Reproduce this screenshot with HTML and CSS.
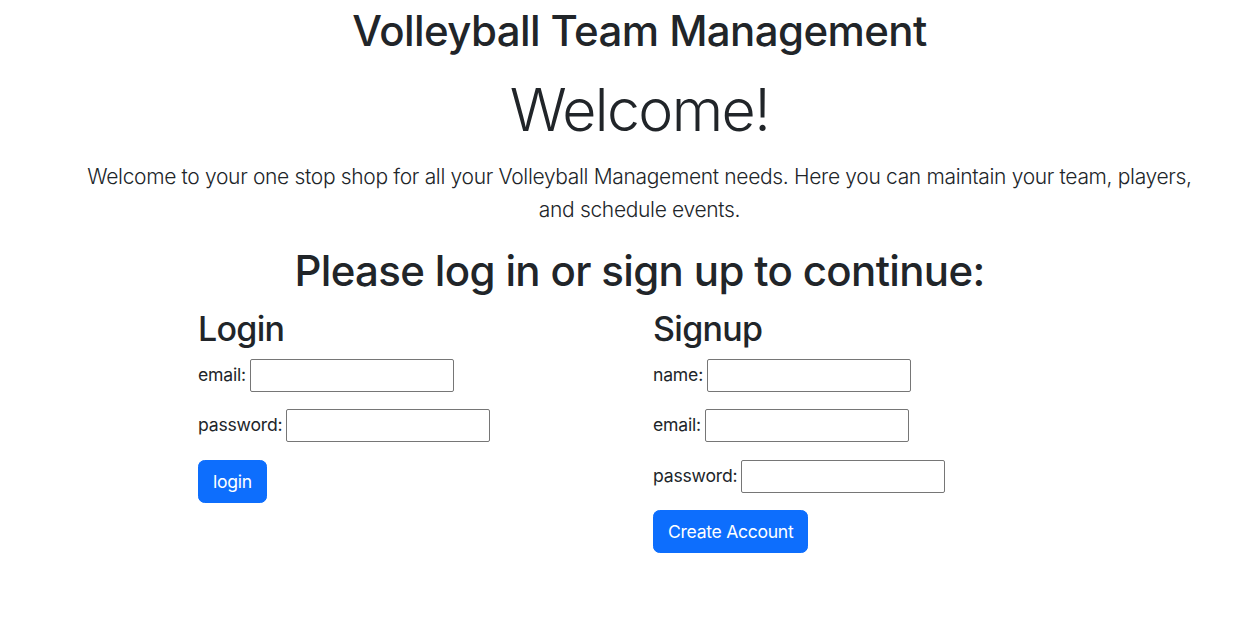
FILE: index.html
```html
<!DOCTYPE html>
<html lang="en">
<head>
<meta charset="utf-8">
<title>Volleyball Team Management</title>
<link rel="stylesheet" href="styles.css">
</head>
<body>
<main class="page">
  <h1 class="title">Volleyball Team Management</h1>
  <h2 class="welcome">Welcome!</h2>
  <p class="lead">Welcome to your one stop shop for all your Volleyball Management needs. Here you can maintain your team, players, and schedule events.</p>
  <h1 class="prompt">Please log in or sign up to continue:</h1>
  <div class="forms">
    <form class="form-col">
      <h2 class="form-title">Login</h2>
      <div class="field"><label for="login-email">email:</label><input id="login-email" type="email"></div>
      <div class="field"><label for="login-password">password:</label><input id="login-password" type="password"></div>
      <button type="button" class="btn">login</button>
    </form>
    <form class="form-col">
      <h2 class="form-title">Signup</h2>
      <div class="field"><label for="signup-name">name:</label><input id="signup-name" type="text"></div>
      <div class="field"><label for="signup-email">email:</label><input id="signup-email" type="email"></div>
      <div class="field"><label for="signup-password">password:</label><input id="signup-password" type="password"></div>
      <button type="button" class="btn">Create Account</button>
    </form>
  </div>
</main>
</body>
</html>
```

FILE: styles.css
```css
* { box-sizing: border-box; }

html, body {
  margin: 0;
  background: #fff;
}

body {
  font-family: Inter, "Noto Sans", "Liberation Sans", sans-serif;
  color: #212529;
  font-size: 17.6px;
  line-height: 1.5;
}

.page {
  padding: 5px 0 0 40px;
}

.title,
.prompt {
  margin: 0;
  text-align: center;
  font-size: 42px;
  font-weight: 500;
  line-height: 52.8px;
  letter-spacing: -0.6px;
}

.prompt {
  letter-spacing: -0.65px;
}

.welcome {
  margin: 15px 0 0;
  text-align: center;
  font-size: 59px;
  font-weight: 300;
  line-height: 74px;
  letter-spacing: -1.6px;
}

.lead {
  margin: 13px auto 19px;
  max-width: 1125px;
  text-align: center;
  font-size: 21px;
  font-weight: 300;
  line-height: 33px;
  letter-spacing: -0.33px;
}

.forms {
  display: grid;
  grid-template-columns: 455px 455px;
  padding-left: 158px;
  margin-top: 10px;
}

.form-col {
  display: flex;
  flex-direction: column;
  align-items: flex-start;
  gap: 17.6px;
}

.form-title {
  margin: 0 0 -8.8px;
  font-size: 34px;
  font-weight: 500;
  line-height: 42.2px;
  letter-spacing: -0.7px;
}

.field {
  display: flex;
  align-items: center;
  gap: 4px;
  height: 33px;
  letter-spacing: -0.2px;
}

.field label {
  white-space: nowrap;
}

.field input {
  width: 204px;
  height: 33px;
  border: 1px solid #767676;
  border-radius: 2px;
  padding: 1px 3px;
  font: inherit;
  background: #fff;
}

.btn {
  font: inherit;
  color: #fff;
  background: #0d6efd;
  border: 1px solid #0d6efd;
  border-radius: 6.6px;
  padding: 7px 14px;
  line-height: 27px;
  letter-spacing: -0.3px;
  cursor: pointer;
}
```
